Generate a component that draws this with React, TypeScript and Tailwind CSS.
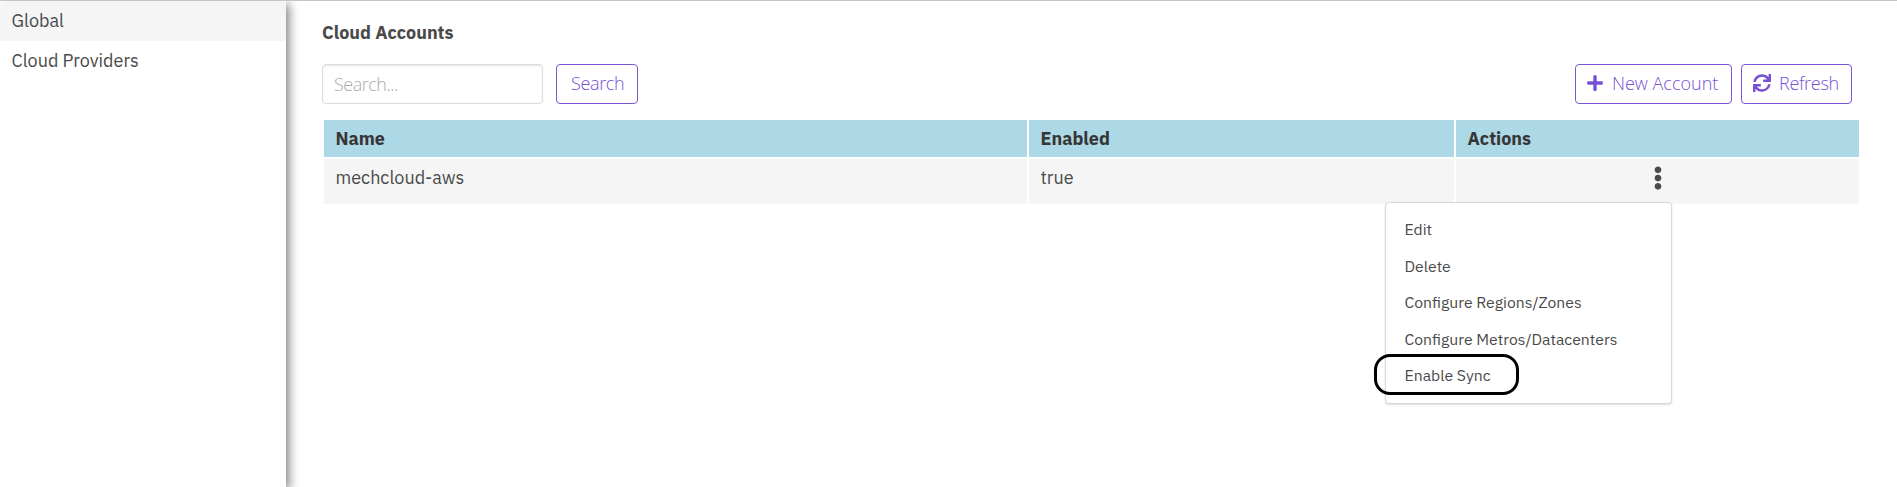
import React from "react";
import { FaPlus, FaSync, FaEllipsisV } from "react-icons/fa";

const plex = "font-['IBM_Plex_Sans',Roboto,sans-serif]";
const segoe = "font-['Open_Sans',sans-serif] font-light";

const button =
  "flex h-10 items-center rounded border border-[#7b57d6] bg-white pb-0.5 text-[18px] leading-6 text-[#7650d5] whitespace-nowrap";

const menuItems = ["Edit", "Delete", "Configure Regions/Zones", "Configure Metros/Datacenters", "Enable Sync"];

const headerCell = "h-[37px] bg-[#add8e6] pl-[11.5px] font-bold leading-[37px] text-[#363636]";
const bodyCell = "h-[45px] bg-[#f5f5f5] pl-[11.5px] leading-[38px]";

function Sidebar() {
  return (
    <nav className="relative z-10 w-[286px] shrink-0 bg-white text-[18px] leading-6 text-[#4a4a4a] shadow-[3px_3px_10px_rgba(0,0,0,0.5)]">
      <div className="h-10 rounded-sm bg-[#f5f5f5] px-[11.5px] py-2">Global</div>
      <div className="h-10 px-[11.5px] py-2">Cloud Providers</div>
    </nav>
  );
}

function ActionMenu() {
  return (
    <div className="absolute left-[-71px] top-[43px] h-[202px] w-[287px] rounded border border-[#d8d8d8] bg-white pt-2 pl-[18.5px] text-[15.75px] text-[#4a4a4a] shadow-[0_1px_2px_rgba(34,36,38,0.15)]">
      {menuItems.map((label) => (
        <div key={label} className="h-[36.5px] leading-[36.5px] whitespace-nowrap">
          {label}
        </div>
      ))}
      <div className="absolute left-[-12px] top-[151px] h-[41px] w-[145px] rounded-[16px] border-[3px] border-black" />
    </div>
  );
}

function Accounts() {
  return (
    <div className="mt-4 ml-0.5 grid w-[1535px] grid-cols-[703px_425px_403px] gap-0.5 text-[18px] text-[#4a4a4a]">
      <div className={headerCell}>Name</div>
      <div className={headerCell}>Enabled</div>
      <div className={headerCell}>Actions</div>
      <div className={bodyCell}>mechcloud-aws</div>
      <div className={bodyCell}>true</div>
      <div className="relative flex h-[45px] justify-center bg-[#f5f5f5] pt-[6.5px]">
        <FaEllipsisV className="size-6" />
        <ActionMenu />
      </div>
    </div>
  );
}

export default function App() {
  return (
    <div className={`flex h-[487px] w-[1897px] overflow-hidden border-t border-[#c4c4c4] bg-white ${plex}`}>
      <Sidebar />
      <main className="flex flex-col pl-9">
        <h1 className="mt-5 h-6 text-[18px] font-bold leading-6 text-[#4a4a4a]">Cloud Accounts</h1>
        <div className={`mt-[19px] flex w-[1530px] ${segoe}`}>
          <input
            placeholder="Search..."
            className="h-10 w-[221px] rounded border border-[#dbdbdb] px-[11px] text-[18px] tracking-[-0.5px] shadow-[inset_0_1px_2px_rgba(10,10,10,0.1)] placeholder:text-[#aaaaaa]"
          />
          <button className={`${button} ml-[13px] w-[82px] pl-[14px] tracking-[-0.35px]`}>Search</button>
          <button className={`${button} ml-auto w-[157px] pl-2.5`}>
            <FaPlus className="mr-2 size-[18px]" />
            New Account
          </button>
          <button className={`${button} ml-[9px] w-[111px] pl-[11px] tracking-[-0.3px]`}>
            <FaSync className="mr-2 size-[18px]" />
            Refresh
          </button>
        </div>
        <Accounts />
      </main>
    </div>
  );
}
